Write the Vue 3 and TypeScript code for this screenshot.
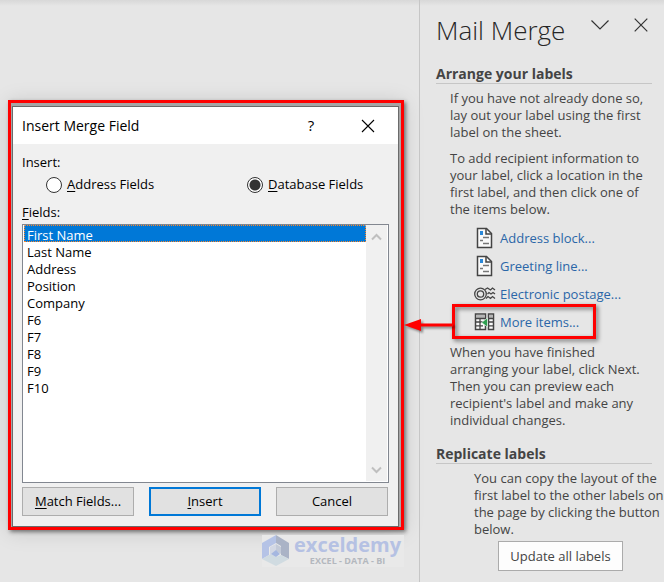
<script setup lang="ts">
import { ref } from 'vue'

type Source = 'address' | 'database'

const source = ref<Source>('database')
const fields = ['First Name', 'Last Name', 'Address', 'Position', 'Company', 'F6', 'F7', 'F8', 'F9', 'F10']
const selected = ref('First Name')
</script>

<template>
  <div class="app">
    <main class="canvas">
      <section class="frame">
        <form class="dialog" aria-labelledby="dialog-title" @submit.prevent>
          <header class="titlebar">
            <h1 id="dialog-title">Insert Merge Field</h1>
            <button type="button" class="tool help" aria-label="Help">?</button>
            <button type="button" class="tool" aria-label="Close">
              <svg width="14" height="14" viewBox="0 0 14 14"><path d="M1 1 13 13M13 1 1 13" fill="none" stroke="#000" stroke-width="1.1" /></svg>
            </button>
          </header>
          <div class="content">
            <fieldset>
              <legend>Insert:</legend>
              <div class="radios">
                <label><input v-model="source" type="radio" name="source" value="address" /><span><u>A</u>ddress Fields</span></label>
                <label><input v-model="source" type="radio" name="source" value="database" /><span><u>D</u>atabase Fields</span></label>
              </div>
            </fieldset>
            <label class="list-label" for="fields"><u>F</u>ields:</label>
            <div class="listbox">
              <select id="fields" v-model="selected" size="15">
                <option v-for="field in fields" :key="field" :value="field">{{ field }}</option>
              </select>
              <div class="scrollbar">
                <svg width="11" height="8" viewBox="0 0 11 8"><path d="M1 6.500 5.500 2 10 6.500" fill="none" stroke="#bfbfbf" stroke-width="2" /></svg>
                <svg width="11" height="8" viewBox="0 0 11 8"><path d="M1 1.500 5.500 6 10 1.500" fill="none" stroke="#bfbfbf" stroke-width="2" /></svg>
              </div>
            </div>
            <div class="actions">
              <button type="button"><u>M</u>atch Fields...</button>
              <button type="submit" class="default"><u>I</u>nsert</button>
              <button type="button">Cancel</button>
            </div>
          </div>
        </form>
      </section>
      <div class="brand">
        <svg width="28" height="32" viewBox="0 0 28 32">
          <path d="M14 0 0 8V24L7 20V12L14 8Z" fill="#b5c3e6" />
          <path d="M14 0 27 8V24L19 20V11L14 8Z" fill="#aab3c6" />
          <path d="M0 24 9 19 14 22 19 20 27 24 14 31Z" fill="#d0dbe1" />
          <path d="M8 12 14 9V17L8 20Z" fill="#d3d8e4" />
          <path d="M14 9 19 12V19L14 16Z" fill="#c3cad8" />
          <path d="M9 19 14 15 18 19 14 22Z" fill="#a5b7e0" />
        </svg>
        <div class="brand-text">
          <strong>exceldemy</strong>
          <small>EXCEL - DATA - BI</small>
        </div>
      </div>
    </main>

    <aside class="pane">
      <header class="pane-head">
        <h2>Mail Merge</h2>
        <button type="button" class="icon" aria-label="Pane options">
          <svg width="18" height="10" viewBox="0 0 18 10"><path d="M.5 .5 9 9 17.500 .5" fill="none" stroke="#333" stroke-width="1.200" /></svg>
        </button>
        <button type="button" class="icon" aria-label="Close pane">
          <svg width="14" height="14" viewBox="0 0 14 14"><path d="M.7 .7 13.300 13.300M13.300 .7 .7 13.300" fill="none" stroke="#333" stroke-width="1.200" /></svg>
        </button>
      </header>

      <h3>Arrange your labels</h3>
      <div class="copy">
        <p>If you have not already done so,<br />lay out your label using the first<br />label on the sheet.</p>
        <p>To add recipient information to<br />your label, click a location in the<br />first label, and then click one of<br />the items below.</p>
      </div>
      <ul class="links">
        <li v-for="name in ['Address block...', 'Greeting line...']" :key="name">
          <svg width="22" height="22" viewBox="0 0 22 22">
            <path d="M3.500 1.500H12.500L17.500 6.500V20.500H3.500Z" fill="#fafafa" stroke="#444" stroke-width="1.500" />
            <path d="M12 1.500V7H17.500" fill="none" stroke="#444" stroke-width="1.500" />
            <path d="M6 4H9V8H6Z" fill="#2b88d8" />
            <path d="M9 10.500H15M6 13.500H9M9 16.500H15" stroke="#777" stroke-width="1.500" />
          </svg>
          <a href="#">{{ name }}</a>
        </li>
        <li>
          <svg width="22" height="22" viewBox="0 0 22 22">
            <circle cx="6.500" cy="11" r="5.800" fill="none" stroke="#444" stroke-width="1.300" />
            <circle cx="6.500" cy="11" r="3.200" fill="none" stroke="#444" stroke-width="1.300" />
            <path d="M11 6.500 13.500 5 16.500 7 18.500 5 21 7M13.500 11 15 9.500 17 11 19 9.500 21 11M12 15.500 14 13.500 16.500 15.500 18.500 13.500 21 15.500" fill="none" stroke="#444" stroke-width="1.300" />
          </svg>
          <a href="#">Electronic postage...</a>
        </li>
        <li class="marked">
          <svg width="22" height="22" viewBox="0 0 22 22">
            <path d="M1.500 3H11.500V18.500H1.500ZM14.500 3H19.500V18.500H14.500Z" fill="#fafafa" stroke="#444" stroke-width="1.500" />
            <path d="M2 4H11V7H2ZM15 4H19V7H15Z" fill="#b5b5b5" />
            <path d="M1.500 7.500H11.500M1.500 11H9M1.500 14.800H9M6 7.500V18.500M14.500 7.500H19.500M14.500 11H19.500M14.500 14.800H19.500" stroke="#444" stroke-width="1.300" />
            <path d="M7.500 11.500 13.500 7V16Z" fill="#2e9e4f" stroke="#fafafa" stroke-width=".6" />
          </svg>
          <a href="#">More items...</a>
          <svg class="arrow" width="50" height="18" viewBox="0 0 50 18"><path d="M1 9 18 3V7.500H50V10.500H18V15Z" fill="#f00" /></svg>
        </li>
      </ul>
      <div class="copy">
        <p>When you have finished<br />arranging your label, click Next.<br />Then you can preview each<br />recipient's label and make any<br />individual changes.</p>
      </div>

      <h3 class="second">Replicate labels</h3>
      <div class="copy deep">
        <p>You can copy the layout of the<br />first label to the other labels on<br />the page by clicking the button<br />below.</p>
        <button type="button" class="update">Update all labels</button>
      </div>
    </aside>
  </div>
</template>

<style>
body {
  margin: 0;
  background: #e6e6e6;
}
</style>

<style scoped>
*,
*::before {
  box-sizing: border-box;
}
.app {
  display: grid;
  grid-template-columns: minmax(0, 1fr) 245px;
  min-height: 100vh;
  overflow: hidden;
  background: linear-gradient(#d8d8d8, #e6e6e6 6px);
  font: 13px/17px "Open Sans", "Noto Sans", sans-serif;
  color: #444;
}
button {
  font: inherit;
  color: inherit;
  padding: 0;
}
h1, h2, h3, p, ul {
  margin: 0;
  padding: 0;
}
u {
  text-underline-offset: 2px;
}
.canvas {
  display: flex;
  flex-direction: column;
  padding: 100px 15px 0 8px;
}
.frame {
  padding: 3px 2px 0 1px;
  border: 3px solid #f00;
  background: #a6a6a6;
  box-shadow: 2px 2px 4px #0007, 0 2px 20px #0002;
}
.dialog {
  border: 1px solid #6b6b6b;
  background: #f0f0f0;
  color: #000;
}
.titlebar {
  display: flex;
  align-items: center;
  height: 37px;
  padding: 0 9px;
  background: #fff;
}
.titlebar h1 {
  flex: 1;
  font-size: 14px;
  font-weight: 400;
}
.tool {
  display: flex;
  justify-content: center;
  width: 42px;
  border: 0;
  background: none;
}
.help {
  width: 72px;
  font-size: 15px;
}
.content {
  padding: 10px 9px;
}
fieldset {
  margin: 0;
  padding: 0;
  border: 0;
}
legend {
  padding: 0;
}
.radios {
  display: grid;
  grid-template-columns: 201px 1fr;
  padding: 5px 0 0 24px;
}
.radios label {
  display: flex;
  align-items: center;
  gap: 5px;
}
.radios input {
  appearance: none;
  width: 16px;
  height: 16px;
  margin: 0;
  border: 1px solid #333;
  border-radius: 50%;
  background: #fff;
}
.radios input:checked {
  background: radial-gradient(circle, #333 5px, #fff 6px);
}
.list-label {
  display: block;
  margin: 11px 0 3px;
}
.listbox {
  display: flex;
  height: 259px;
  padding: 0 1px 1px;
  border: 1px solid #828790;
  background: #fff;
}
select {
  flex: 1;
  min-width: 0;
  height: 100%;
  padding: 0;
  border: 0;
  outline: 0;
  overflow: hidden;
  background: #fff;
  font: inherit;
  color: #000;
}
option {
  height: 17px;
  min-height: 17px;
  padding: 0 2px;
  border: 1px solid transparent;
  line-height: 15px;
}
option:checked {
  border: 1px dotted #ff8728;
  background: linear-gradient(#0078d7, #0078d7) padding-box, #0078d7;
  -webkit-text-fill-color: #fff;
}
.scrollbar {
  display: flex;
  flex-direction: column;
  align-items: center;
  justify-content: space-between;
  width: 21px;
  padding: 8px 0 7px;
  background: #f0f0f0;
}
.actions {
  display: grid;
  grid-template-columns: repeat(3, 1fr);
  gap: 15px;
  margin: 4px 1px 0 0;
}
.actions button {
  height: 29px;
  border: 1px solid #adadad;
  background: #e1e1e1;
}
.actions .default {
  border: 2px solid #0078d7;
}
.brand {
  display: flex;
  align-self: flex-end;
  gap: 4px;
  width: 142px;
  height: 32px;
  margin-top: 5px;
  background: #e9e9e9;
}
.brand-text {
  display: flex;
  flex-direction: column;
  align-items: center;
  white-space: nowrap;
}
.brand strong {
  font: 700 20px/20px "Open Sans", sans-serif;
  color: #b5c1e3;
}
.brand small {
  font: 700 9px/12px "Open Sans", sans-serif;
  color: #b4b8be;
}
.pane {
  padding: 13px 12px 0 16px;
  border-left: 1px solid #c6c6c6;
  white-space: nowrap;
}
.pane-head {
  display: flex;
  align-items: flex-start;
  height: 52px;
}
.pane-head h2 {
  flex: 1;
  font: 300 26px/34px "Open Sans", sans-serif;
  color: #262626;
}
.icon {
  display: flex;
  align-items: center;
  justify-content: center;
  width: 28px;
  height: 24px;
  border: 0;
  background: none;
}
.icon:last-child {
  justify-content: flex-end;
  width: 34px;
  margin-right: 4px;
}
h3 {
  height: 19px;
  border-bottom: 1px solid #c6c6c6;
  font-size: 14px;
  line-height: 18px;
}
.copy {
  padding: 6px 0 0 14px;
}
.copy p + p {
  margin-top: 9px;
}
.links {
  padding: 6px 0 2px 38px;
  list-style: none;
}
.links li {
  display: flex;
  align-items: center;
  gap: 4px;
  height: 28px;
}
.links a {
  color: #2b66a8;
  text-decoration: none;
}
.marked {
  position: relative;
}
.marked::before {
  content: "";
  position: absolute;
  top: -4px;
  left: -22px;
  width: 144px;
  height: 35px;
  border: 3px solid #f00;
  filter: drop-shadow(2px 2px 2px #0008);
}
.arrow {
  position: absolute;
  top: 8px;
  left: -71px;
  filter: drop-shadow(2px 2px 1px #0006);
}
.second {
  margin-top: 16px;
}
.deep {
  padding-left: 38px;
}
.update {
  display: block;
  width: 125px;
  height: 30px;
  margin: 3px 0 0 24px;
  border: 1px solid #ababab;
  background: #fdfdfd;
}
</style>
